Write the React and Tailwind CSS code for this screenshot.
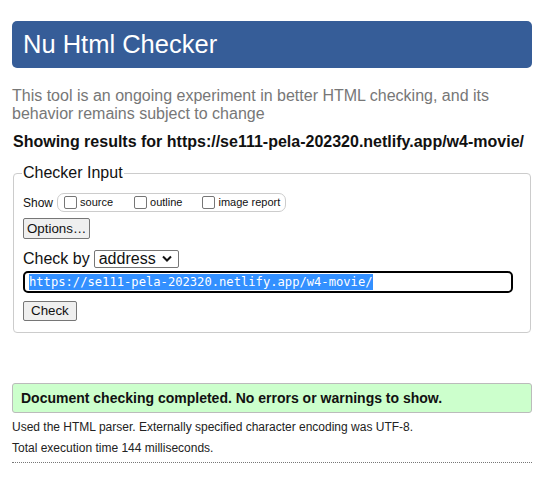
import React from 'react';

const Checkbox = ({ label }) => (
  <label className="flex items-center gap-[3px]">
    <span className="inline-block w-[13px] h-[13px] border border-[#767676] rounded-[2px] bg-white" />
    <span className="text-[11px]">{label}</span>
  </label>
);

const App = () => {
  return (
    <div className="w-[544px] h-[489px] bg-white text-[#111] font-['Liberation_Sans',Arial,sans-serif] px-3 pt-[21px]">
      <h1 className="h-[47px] bg-[#365d98] rounded-[5px] text-white text-[25.5px] leading-[47px] pl-[11px]">
        Nu Html Checker
      </h1>

      <p className="mt-[19px] text-[16px] leading-[18px] text-[#777]">
        This tool is an ongoing experiment in better HTML checking, and its behavior remains subject to change
      </p>

      <p className="mt-[10px] text-[16px] leading-[18px] font-bold pl-px">
        Showing results for https://se111-pela-202320.netlify.app/w4-movie/
      </p>

      <fieldset className="mt-[13px] ml-px mr-px border border-[#ccc] rounded-[4px] px-[9px] pb-[10px]">
        <legend className="text-[16px] leading-[18px] px-px -ml-px">Checker Input</legend>

        <div className="flex items-center mt-[11px] text-[12px]">
          <span>Show</span>
          <div className="ml-[4px] flex items-center h-[19px] border border-[#ccc] rounded-[7px] pl-[6px] pr-[5px]">
            <Checkbox label="source" />
            <span className="w-[21px]" />
            <Checkbox label="outline" />
            <span className="w-[20px]" />
            <Checkbox label="image report" />
          </div>
        </div>

        <button className="mt-[6px] h-[21px] px-[3px] bg-[#efefef] border border-[#767676] rounded-[2px] text-[13.33px] leading-[19px]">
          Options…
        </button>

        <div className="flex items-center mt-[9px] h-[20px]">
          <span className="text-[16px] leading-[18px]">Check by</span>
          <div className="ml-[4px] relative w-[85px] h-[18px] border border-[#767676] rounded-[2px] bg-white text-[16px] leading-[16px] pl-[4px]">
            address
            <svg className="absolute right-[6px] top-[4px]" width="10" height="8" viewBox="0 0 10 8">
              <path d="M1 1.5 L5 5.5 L9 1.5" fill="none" stroke="#111" strokeWidth="2" />
            </svg>
          </div>
        </div>

        <div className="mt-[2px] mr-[8px] h-[22px] border-2 border-black rounded-[5px] flex items-center pl-[4px] font-['DejaVu_Sans_Mono',monospace] text-[12.15px]">
          <span className="bg-[#3390ff] text-white leading-[16px]">https://se111-pela-202320.netlify.app/w4-movie/</span>
        </div>

        <button className="mt-[8px] h-[20px] px-[7px] bg-[#efefef] border border-[#767676] rounded-[2px] text-[13.33px] leading-[18px]">
          Check
        </button>
      </fieldset>

      <div className="mt-[50px] h-[30px] bg-[#ccffcc] border border-[#bbb] rounded-[3px] flex items-center pl-[8px] font-bold text-[14px]">
        Document checking completed. No errors or warnings to show.
      </div>

      <p className="mt-[7px] text-[12px] leading-[14px] text-[#222]">
        Used the HTML parser. Externally specified character encoding was UTF-8.
      </p>
      <p className="mt-[7px] text-[12px] leading-[14px] text-[#222]">
        Total execution time 144 milliseconds.
      </p>
      <div className="mt-[7px] border-t border-dotted border-[#777]" />
    </div>
  );
};

export default App;
